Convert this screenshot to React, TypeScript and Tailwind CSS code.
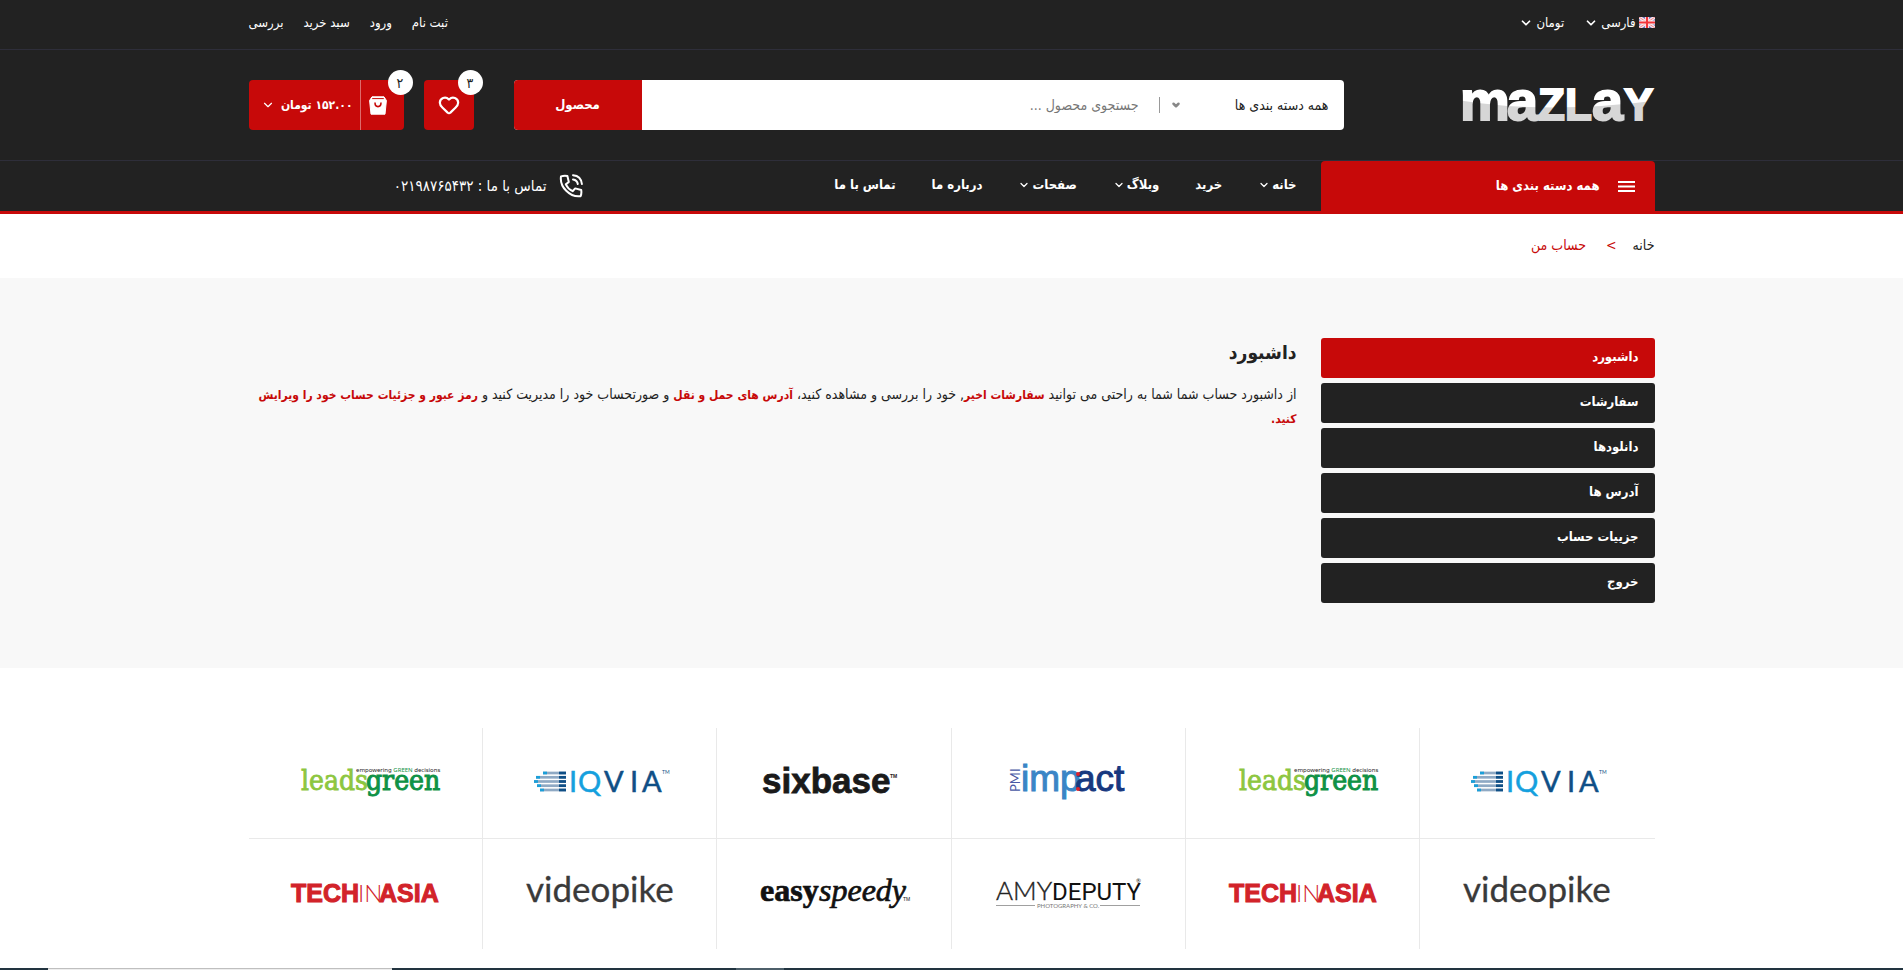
import React from "react";
import { ChevronDown, Heart } from "lucide-react";

const container = "mx-auto w-full max-w-[1430px] px-3";

function FlagIcon() {
  return (
    <svg viewBox="0 0 16 11" className="h-[11px] w-4" aria-hidden="true">
      <rect width="16" height="11" fill="#6c76c4" />
      <path d="M0 0L16 11M16 0L0 11" stroke="#fbe6e8" strokeWidth="3.4" />
      <path d="M0 0L16 11M16 0L0 11" stroke="#f08a90" strokeWidth="1" />
      <path d="M8 0V11M0 5.5H16" stroke="#fbeef0" strokeWidth="4" />
      <path d="M8 0V11M0 5.5H16" stroke="#f2353b" strokeWidth="2.2" />
    </svg>
  );
}

function MazlayLogo() {
  return (
    <svg viewBox="0 0 192 32" className="h-8 w-48 overflow-visible" role="img" aria-label="Mazlay" direction="ltr">
      <defs>
        <pattern id="sweep" patternUnits="userSpaceOnUse" x="-6" y="-10" width="204" height="60">
          <rect width="204" height="60" fill="#ffffff" />
          <path d="M0 21Q90 36 204 21V60H0Z" fill="#d6d6d6" />
        </pattern>
      </defs>
      <g fill="url(#sweep)" stroke="url(#sweep)" strokeWidth="2" fontFamily="Liberation Sans" fontWeight="700">
        <text x="-3" y="31" fontSize="56">m</text>
        <text x="44" y="31" fontSize="56">a</text>
        <text x="75" y="31" fontSize="44">Z</text>
        <text x="102" y="31" fontSize="44">L</text>
        <text x="129" y="31" fontSize="56">a</text>
        <text x="161" y="31" fontSize="44">Y</text>
      </g>
    </svg>
  );
}

function BagIcon() {
  return (
    <svg viewBox="0 0 18 19" className="h-[19px] w-[18px]" aria-hidden="true">
      <path d="M3 .8H15L17.4 4.5 16 18.2H2L.6 4.5Z" fill="#fff" stroke="#fff" strokeLinejoin="round" />
      <path d="M3.2 2.6H14.8" stroke="#c70909" strokeWidth="1" />
      <path d="M6 6.5C6 12 12 12 12 6.5" fill="none" stroke="#c70909" strokeWidth="1.6" />
    </svg>
  );
}

function PhoneIcon() {
  return (
    <svg viewBox="0 0 24 24" className="size-6" fill="none" stroke="#fff" strokeWidth="2" strokeLinecap="round" strokeLinejoin="round" aria-hidden="true">
      <path d="M2 2.4Q5 1.4 8.4 2L9.8 8 6.8 10.4C8.4 13.8 10.4 15.8 13.6 17.2L16.2 14.4 22.2 16Q22.8 19.4 21.6 22.2C11 23.6.4 13 2 2.4Z" />
      <path d="M14 1.2C19 1.6 22.4 5 22.9 10M14 5.4C16.6 5.8 18.4 7.4 18.8 10" />
    </svg>
  );
}

function LogoFrame({ label, children }: { label: string; children: React.ReactNode }) {
  return (
    <svg viewBox="0 0 200 110" className="h-[110px] w-[200px]" role="img" aria-label={label} direction="ltr">
      {children}
    </svg>
  );
}

function LeadsGreen() {
  return (
    <LogoFrame label="leadsgreen">
      <g fontFamily="DejaVu Serif Condensed, DejaVu Serif" fontSize="28">
        <text x="36" y="62" fill="#8dc63f" stroke="#8dc63f" strokeWidth=".8">leads</text>
        <text x="101" y="62" fill="#0f9246" stroke="#0f9246" strokeWidth="1">green</text>
      </g>
      <text x="91" y="44" fontFamily="Noto Sans" fontSize="6" fill="#222">
        empowering <tspan fill="#0f9246">GREEN</tspan> decisions
      </text>
    </LogoFrame>
  );
}

const iqviaBars = [
  { y: 45, x: 43 },
  { y: 49.3, x: 36 },
  { y: 53.5, x: 34 },
  { y: 57.7, x: 37 },
  { y: 62, x: 40 },
];

function Iqvia() {
  return (
    <LogoFrame label="IQVIA">
      {iqviaBars.map((b) => (
        <g key={b.y} strokeWidth="2.7">
          <path d={`M${b.x} ${b.y}H66`} stroke="#8fa9c4" />
          <path d={`M${b.x} ${b.y}h4`} stroke="#1b9fd9" />
          <path d={`M59 ${b.y}H66`} stroke="#0f4f86" />
        </g>
      ))}
      <g fontFamily="Lato" fontSize="29" fill="#14a0de" stroke="#14a0de" strokeWidth=".5">
        <text x="69" y="64">I</text>
        <text x="78" y="64">Q</text>
      </g>
      <g fontFamily="Lato" fontSize="29" fill="#0f4f86" stroke="#0f4f86" strokeWidth=".5">
        <text x="104" y="64">V</text>
        <text x="130" y="64">I</text>
        <text x="142" y="64">A</text>
      </g>
      <text x="162" y="46" fontFamily="Lato" fontSize="5" fill="#0f4f86">TM</text>
    </LogoFrame>
  );
}

function Sixbase() {
  return (
    <LogoFrame label="sixbase">
      <text x="28" y="65" fontFamily="Liberation Sans" fontWeight="700" fontSize="35" fill="#1a1a1a" stroke="#1a1a1a" strokeWidth=".8">sixbase</text>
      <text x="156" y="50" fontFamily="Liberation Sans" fontWeight="700" fontSize="5" fill="#1a1a1a">TM</text>
    </LogoFrame>
  );
}

function Impact() {
  return (
    <LogoFrame label="PMI impact">
      <text transform="translate(52 64) rotate(-90)" fontFamily="Lato" fontSize="13" fill="#4a5aa5">PMI</text>
      <g fontFamily="Liberation Sans" fontSize="37">
        <text x="53" y="63" fill="#3a85c6" stroke="#3a85c6" strokeWidth="1">imp</text>
        <text x="107" y="63" fill="#17387f" stroke="#17387f" strokeWidth="1">act</text>
      </g>
      <circle cx="110" cy="46" r="2" fill="#e0202b" />
      <circle cx="110" cy="61" r="2" fill="#e0202b" />
    </LogoFrame>
  );
}

function TechInAsia() {
  return (
    <LogoFrame label="Tech in Asia">
      <g fill="#d2232a" fontFamily="Liberation Sans" fontSize="25">
        <text x="26" y="63" fontWeight="700" stroke="#d2232a" strokeWidth="1">TECH</text>
        <text x="93" y="63" fontFamily="Lato" fontWeight="300" fontSize="24">IN</text>
        <text x="114" y="63" fontWeight="700" stroke="#d2232a" strokeWidth="1">ASIA</text>
      </g>
    </LogoFrame>
  );
}

function Videopike() {
  return (
    <LogoFrame label="videopike">
      <text x="26" y="63" fontFamily="Lato" fontSize="35" fill="#3a3a3a" stroke="#3a3a3a" strokeWidth=".3">videopike</text>
    </LogoFrame>
  );
}

function EasySpeedy() {
  return (
    <LogoFrame label="easyspeedy">
      <g fontFamily="Liberation Serif" fontSize="32" fill="#111" stroke="#111" strokeWidth=".7">
        <text x="26" y="62" fontWeight="700">easy</text>
        <text x="85" y="62" fontStyle="italic">speedy</text>
      </g>
      <text x="169" y="62" fontFamily="Liberation Sans" fontSize="5" fill="#111">TM</text>
    </LogoFrame>
  );
}

function AmyDeputy() {
  return (
    <LogoFrame label="Amy Deputy Photography & Co.">
      <text x="28" y="61" fontFamily="Lato" fontWeight="300" fontSize="26" fill="#222" stroke="#222" strokeWidth=".4">AMY</text>
      <text x="84" y="61" fontFamily="Roboto" fontSize="24" fill="#111">DEPUTY</text>
      <text x="168" y="44" fontFamily="Lato" fontSize="6" fill="#222">®</text>
      <path d="M28 66.5H67M132 66.5H172" stroke="#888" strokeWidth=".8" />
      <text x="69" y="69" fontFamily="Lato" fontSize="6" fill="#777">PHOTOGRAPHY &amp; CO.</text>
    </LogoFrame>
  );
}

const brands = [Iqvia, LeadsGreen, Impact, Sixbase, Iqvia, LeadsGreen, Videopike, TechInAsia, AmyDeputy, EasySpeedy, Videopike, TechInAsia];

const accountLinks = ["داشبورد", "سفارشات", "دانلودها", "آدرس ها", "جزییات حساب", "خروج"];

const navLinks = [
  { label: "خانه", menu: true },
  { label: "خرید", menu: false },
  { label: "وبلاگ", menu: true },
  { label: "صفحات", menu: true },
  { label: "درباره ما", menu: false },
  { label: "تماس با ما", menu: false },
];

function TopBar() {
  return (
    <div className="border-b border-[#2e2e3a]">
      <div className={`${container} flex h-[49px] items-center justify-between pb-1 text-[13px]`}>
        <div className="flex items-center gap-5">
          <button type="button" className="flex items-center gap-[3px]">
            <FlagIcon />
            فارسی
            <ChevronDown className="size-3.5" strokeWidth={3} />
          </button>
          <button type="button" className="flex items-center gap-[3px]">
            تومان
            <ChevronDown className="size-3.5" strokeWidth={3} />
          </button>
        </div>
        <nav className="flex gap-5">
          <a href="#register">ثبت نام</a>
          <a href="#login">ورود</a>
          <a href="#cart">سبد خرید</a>
          <a href="#checkout">بررسی</a>
        </nav>
      </div>
    </div>
  );
}

function SearchRow() {
  return (
    <div className={`${container} flex h-[110px] items-center`}>
      <a href="#home" className="w-[311px] shrink-0">
        <MazlayLogo />
      </a>
      <form className="flex h-[50px] flex-1 overflow-hidden rounded bg-white text-[#222]">
        <div className="relative flex w-[185px] shrink-0 items-center">
          <select aria-label="دسته بندی" className="w-full appearance-none bg-transparent pr-[15px] text-sm outline-none">
            <option>همه دسته بندی ها</option>
          </select>
          <ChevronDown className="pointer-events-none absolute left-3 size-2.5 text-[#888]" strokeWidth={6} />
          <span className="h-4 w-px shrink-0 bg-[#999]" />
        </div>
        <input aria-label="جستجو" placeholder="جستجوی محصول ..." className="min-w-0 flex-1 px-5 text-sm outline-none placeholder:text-[#777]" />
        <button type="submit" className="w-32 bg-[#c70909] text-[13px] font-bold text-white">محصول</button>
      </form>
      <button type="button" aria-label="علاقه مندی" className="relative mr-10 flex size-[50px] items-center justify-center rounded bg-[#c70909]">
        <Heart className="size-[22px]" strokeWidth={2.4} />
        <span className="absolute -top-2.5 -right-[9px] flex size-[25px] items-center justify-center rounded-full bg-white text-sm text-[#222]">۳</span>
      </button>
      <button type="button" className="relative mr-5 flex h-[50px] w-[155px] items-center rounded bg-[#c70909]">
        <span className="flex h-full w-11 items-center justify-center border-l border-[#dd6b6b] pr-2">
          <BagIcon />
        </span>
        <span className="flex flex-1 items-center justify-between pr-[7px] pl-3 text-xs font-bold whitespace-nowrap">
          ۱۵۲.۰۰ تومان
          <ChevronDown className="size-3.5" strokeWidth={2} />
        </span>
        <span className="absolute -top-2.5 -right-[9px] flex size-[25px] items-center justify-center rounded-full bg-white text-sm text-[#222]">۲</span>
      </button>
    </div>
  );
}

function NavRow() {
  return (
    <div className="border-t border-b-[3px] border-t-[#2e2e3a] border-b-[#c70909]">
      <div className={`${container} flex h-[50px]`}>
        <button type="button" className="flex w-[334px] shrink-0 items-center gap-[18px] rounded-t bg-[#c70909] px-5 text-[13px] font-bold">
          <svg viewBox="0 0 17 11" className="h-[11px] w-[17px]" aria-hidden="true">
            <path d="M0 1H17M0 5.5H17M0 10H17" stroke="#fff" strokeWidth="2" />
          </svg>
          همه دسته بندی ها
        </button>
        <nav className="flex flex-1 items-center gap-9 pr-6 pb-0.5 text-[13px] font-bold">
          {navLinks.map((n) => (
            <a key={n.label} href="#nav" className="flex items-center gap-0.5">
              {n.label}
              {n.menu && <ChevronDown className="size-3" strokeWidth={2.5} />}
            </a>
          ))}
        </nav>
        <div className="flex w-[334px] shrink-0 items-center gap-3 text-[15px]">
          <PhoneIcon />
          <span>تماس با ما : ۰۲۱۹۸۷۶۵۴۳۲</span>
        </div>
      </div>
    </div>
  );
}

export default function App() {
  return (
    <div dir="rtl" className="min-h-screen bg-white font-['DejaVu_Sans_Condensed','DejaVu_Sans',sans-serif] text-[#222]">
      <header className="bg-[#222] text-white">
        <TopBar />
        <SearchRow />
        <NavRow />
      </header>

      <nav className={`${container} flex h-16 items-center pb-0.5 text-sm`}>
        <a href="#home">خانه</a>
        <span className="mr-4 text-[#c70909]">&gt;</span>
        <span className="mr-5 text-[#c70909]">حساب من</span>
      </nav>

      <main className="bg-[#f8f8f8] pt-[60px] pb-[65px]">
        <div className={`${container} flex gap-6`}>
          <ul className="flex w-[334px] shrink-0 flex-col gap-[5px]">
            {accountLinks.map((label, i) => (
              <li key={label}>
                <a href="#account" className={`flex h-10 items-center rounded-[3px] px-4 pb-0.5 text-[13px] font-bold text-white ${i === 0 ? "bg-[#c70909]" : "bg-[#222]"}`}>
                  {label}
                </a>
              </li>
            ))}
          </ul>
          <section className="min-w-0 flex-1">
            <h1 className="text-[19px] leading-7 font-bold">داشبورد</h1>
            <p className="mt-4 text-sm leading-6">
              از داشبورد حساب شما شما به راحتی می توانید <a href="#orders" className="text-xs leading-4 font-bold text-[#c70909]">سفارشات اخیر</a>, خود را بررسی و مشاهده کنید،{" "}
              <a href="#addresses" className="text-xs leading-4 font-bold text-[#c70909]">آدرس های حمل و نقل</a> و صورتحساب خود را مدیریت کنید و{" "}
              <a href="#details" className="text-xs leading-4 font-bold text-[#c70909]">رمز عبور و جزئیات حساب خود را ویرایش کنید.</a>
            </p>
          </section>
        </div>
      </main>

      <section className={`${container} pt-[60px] pb-[19px]`}>
        <div className="grid grid-cols-6">
          {brands.map((Brand, i) => (
            <a key={i} href="#brand" className={`flex items-center justify-center border-[#e9e9e9] ${i % 6 === 0 ? "" : "border-r"} ${i < 6 ? "border-b" : ""}`}>
              <Brand />
            </a>
          ))}
        </div>
      </section>

      <div dir="ltr" className="flex h-0.5 bg-[#223440]">
        <span className="ml-12 w-[344px] border-t border-[#bfbfbf] bg-[#eee]" />
        <span className="ml-[344px] w-12 bg-[#4d5f6a]" />
      </div>
    </div>
  );
}
